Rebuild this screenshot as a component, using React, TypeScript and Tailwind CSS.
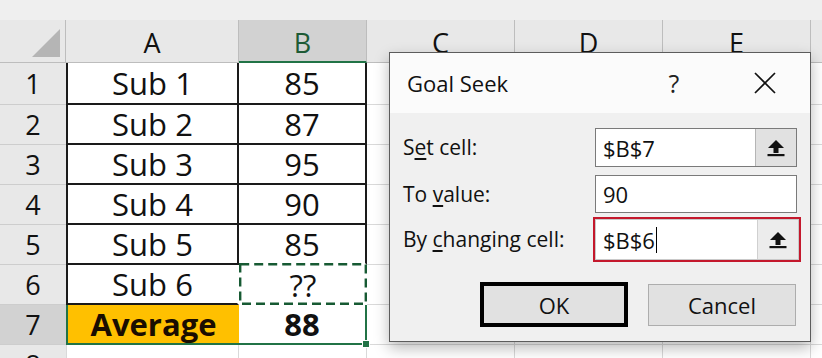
import React from "react";

function UpArrow() {
  return (
    <svg width="20" height="18" viewBox="0 0 20 18">
      <polygon points="10,1 18,9 2,9" fill="#111" />
      <rect x="7.5" y="8.5" width="5" height="5.5" fill="#111" />
      <rect x="1.5" y="15" width="17" height="2.2" fill="#111" />
    </svg>
  );
}

const data: [string, string][] = [
  ["Sub 1", "85"],
  ["Sub 2", "87"],
  ["Sub 3", "95"],
  ["Sub 4", "90"],
  ["Sub 5", "85"],
];

function Empties() {
  return (
    <>
      <div className="w-[148px] shrink-0 border-r border-b border-[#d9d9d9] bg-white" />
      <div className="w-[148px] shrink-0 border-r border-b border-[#d9d9d9] bg-white" />
      <div className="w-[148px] shrink-0 border-r border-b border-[#d9d9d9] bg-white" />
      <div className="flex-1 border-b border-[#d9d9d9] bg-white" />
    </>
  );
}

export default function App() {
  return (
    <div className="relative w-[822px] h-[358px] overflow-hidden bg-white font-['Open_Sans',sans-serif] text-[#111]">
      {/* top strip */}
      <div className="h-[20px] bg-[#efefef]" />
      {/* column header */}
      <div className="flex h-[43px] bg-[#e8e8e8]">
        <div className="relative w-[66px] shrink-0 border-r border-b border-[#bdbdbd]">
          <svg className="absolute left-[32px] top-[9px]" width="28" height="28" viewBox="0 0 28 28">
            <polygon points="28,0 28,28 0,28" fill="#b5b5b5" />
          </svg>
        </div>
        <div className="w-[173px] shrink-0 border-r border-b border-[#bdbdbd] flex items-center justify-center text-[27px] leading-none pt-[3px]">A</div>
        <div className="w-[128px] shrink-0 bg-[#d2d2d2] border-r border-[#bdbdbd] border-b-2 border-b-[#217346] flex items-center justify-center text-[27px] leading-none pt-[3px] text-[#1d5a35]">B</div>
        <div className="w-[148px] shrink-0 border-r border-b border-[#bdbdbd] flex items-center justify-center text-[27px] leading-none pt-[3px]">C</div>
        <div className="w-[148px] shrink-0 border-r border-b border-[#bdbdbd] flex items-center justify-center text-[27px] leading-none pt-[3px]">D</div>
        <div className="w-[148px] shrink-0 border-r border-b border-[#bdbdbd] flex items-center justify-center text-[27px] leading-none pt-[3px]">E</div>
        <div className="flex-1 border-b border-[#bdbdbd]" />
      </div>

      {data.map(([a, b], i) => (
        <div key={i} className={i === 0 ? "flex h-[42px]" : "flex h-[40px]"}>
          <div className="w-[66px] shrink-0 bg-[#e8e8e8] border-b border-[#cdcdcd] flex items-center justify-center text-[27px] leading-none">{i + 1}</div>
          <div className="w-[173px] shrink-0 bg-white border-l-2 border-r-2 border-b-2 border-[#1a1a1a] flex items-center justify-center text-[31px] leading-none">{a}</div>
          <div className={i === 4 ? "w-[128px] shrink-0 bg-white border-r-2 border-b-2 border-[#1a1a1a] border-b-transparent flex items-center justify-center text-[31px] leading-none" : "w-[128px] shrink-0 bg-white border-r-2 border-b-2 border-[#1a1a1a] flex items-center justify-center text-[31px] leading-none"}>{b}</div>
          <Empties />
        </div>
      ))}

      {/* row 6 */}
      <div className="flex h-[40px]">
        <div className="w-[66px] shrink-0 bg-[#e8e8e8] border-b border-[#cdcdcd] flex items-center justify-center text-[27px] leading-none">6</div>
        <div className="w-[173px] shrink-0 bg-white border-l-2 border-r-2 border-b-2 border-[#1a1a1a] border-r-transparent flex items-center justify-center text-[31px] leading-none">Sub 6</div>
        <div className="relative w-[128px] shrink-0 bg-white flex items-center justify-center text-[31px] leading-none">
          ??
          <svg className="absolute left-[-1px] top-[-2px]" width="130" height="42" viewBox="0 0 130 42">
            <rect x="2.2" y="1.2" width="125.6" height="39.6" fill="none" stroke="#175a33" strokeWidth="2.4" strokeDasharray="9 5" />
          </svg>
        </div>
        <Empties />
      </div>

      {/* row 7 */}
      <div className="flex h-[40px]">
        <div className="w-[66px] shrink-0 bg-[#d2d2d2] border-b border-[#cdcdcd] flex items-center justify-center text-[27px] leading-none">7</div>
        <div className="w-[173px] shrink-0 bg-[#ffc000] border-l-2 border-b-2 border-[#217346] flex items-center justify-center text-[31px] font-bold leading-none text-[#1a0d00]">Average</div>
        <div className="relative w-[128px] shrink-0 bg-white border-r-2 border-b-2 border-[#217346] flex items-center justify-center text-[31px] font-bold leading-none">
          88
          <div className="absolute right-[-5px] bottom-[-5px] w-[8px] h-[8px] bg-[#217346] border border-white z-10" />
        </div>
        <Empties />
      </div>

      {/* row 8 */}
      <div className="flex h-[40px]">
        <div className="w-[66px] shrink-0 bg-[#e8e8e8] border-b border-[#cdcdcd] flex items-center justify-center text-[27px] leading-none">8</div>
        <div className="w-[173px] shrink-0 bg-white border-l border-r border-b border-[#d9d9d9]" />
        <div className="w-[128px] shrink-0 bg-white border-r border-b border-[#d9d9d9]" />
        <Empties />
      </div>

      {/* Goal Seek dialog */}
      <div className="absolute left-[389px] top-[52px] w-[422px] h-[290px] border border-[#5c5c5c] bg-[#f0f0f0] flex flex-col shadow-[0_6px_14px_rgba(0,0,0,0.28)]">
        <div className="h-[60px] bg-[#fbfbfb] flex items-center pl-[17px] pr-[25px]">
          <div className="flex-1 text-[22px] leading-none text-[#111]">Goal Seek</div>
          <div className="w-[40px] text-center text-[25px] leading-none text-[#222]">?</div>
          <div className="ml-[51px] w-[40px] flex items-center justify-center">
            <svg width="22" height="22" viewBox="0 0 22 22">
              <path d="M1 1 L21 21 M21 1 L1 21" stroke="#111" strokeWidth="1.7" />
            </svg>
          </div>
        </div>
        <div className="flex-1 flex flex-col pt-[15px] pl-[13px] text-[21px] leading-none">
          <div className="flex items-center h-[39px]">
            <div className="w-[192px]">S<u className="underline-offset-[3px]">e</u>t cell:</div>
            <div className="w-[202px] h-full border border-[#7a7a7a] bg-white flex">
              <div className="flex-1 flex items-center pl-[7px] text-[22px]">$B$7</div>
              <div className="w-[41px] bg-[#e1e1e1] border-l border-[#b5b5b5] flex items-center justify-center">
                <UpArrow />
              </div>
            </div>
          </div>
          <div className="flex items-center h-[38px] mt-[8px]">
            <div className="w-[192px]">To <u className="underline-offset-[3px]">v</u>alue:</div>
            <div className="w-[202px] h-full border border-[#7a7a7a] bg-white flex items-center pl-[7px] text-[22px]">90</div>
          </div>
          <div className="flex items-center h-[45px] mt-[4px]">
            <div className="w-[190px]">By <u className="underline-offset-[3px]">c</u>hanging cell:</div>
            <div className="w-[208px] h-full border-2 border-[#c4182c] bg-white">
              <div className="w-[204px] h-full border border-[#c9c9c9] flex">
                <div className="flex-1 flex items-center pl-[7px] text-[22px]">
                  $B$6<span className="inline-block w-[1px] h-[26px] bg-black ml-[1px]" />
                </div>
                <div className="w-[41px] bg-[#ececec] border-l border-[#d0d0d0] flex items-center justify-center">
                  <UpArrow />
                </div>
              </div>
            </div>
          </div>
          <div className="flex items-center mt-[20px] h-[45px]">
            <div className="ml-[77px] w-[148px] h-[45px] border-4 border-black bg-[#e1e1e1] flex items-center justify-center text-[22px]">OK</div>
            <div className="ml-[20px] w-[148px] h-[42px] border border-[#adadad] bg-[#e1e1e1] flex items-center justify-center text-[22px]">Cancel</div>
          </div>
        </div>
      </div>
    </div>
  );
}
